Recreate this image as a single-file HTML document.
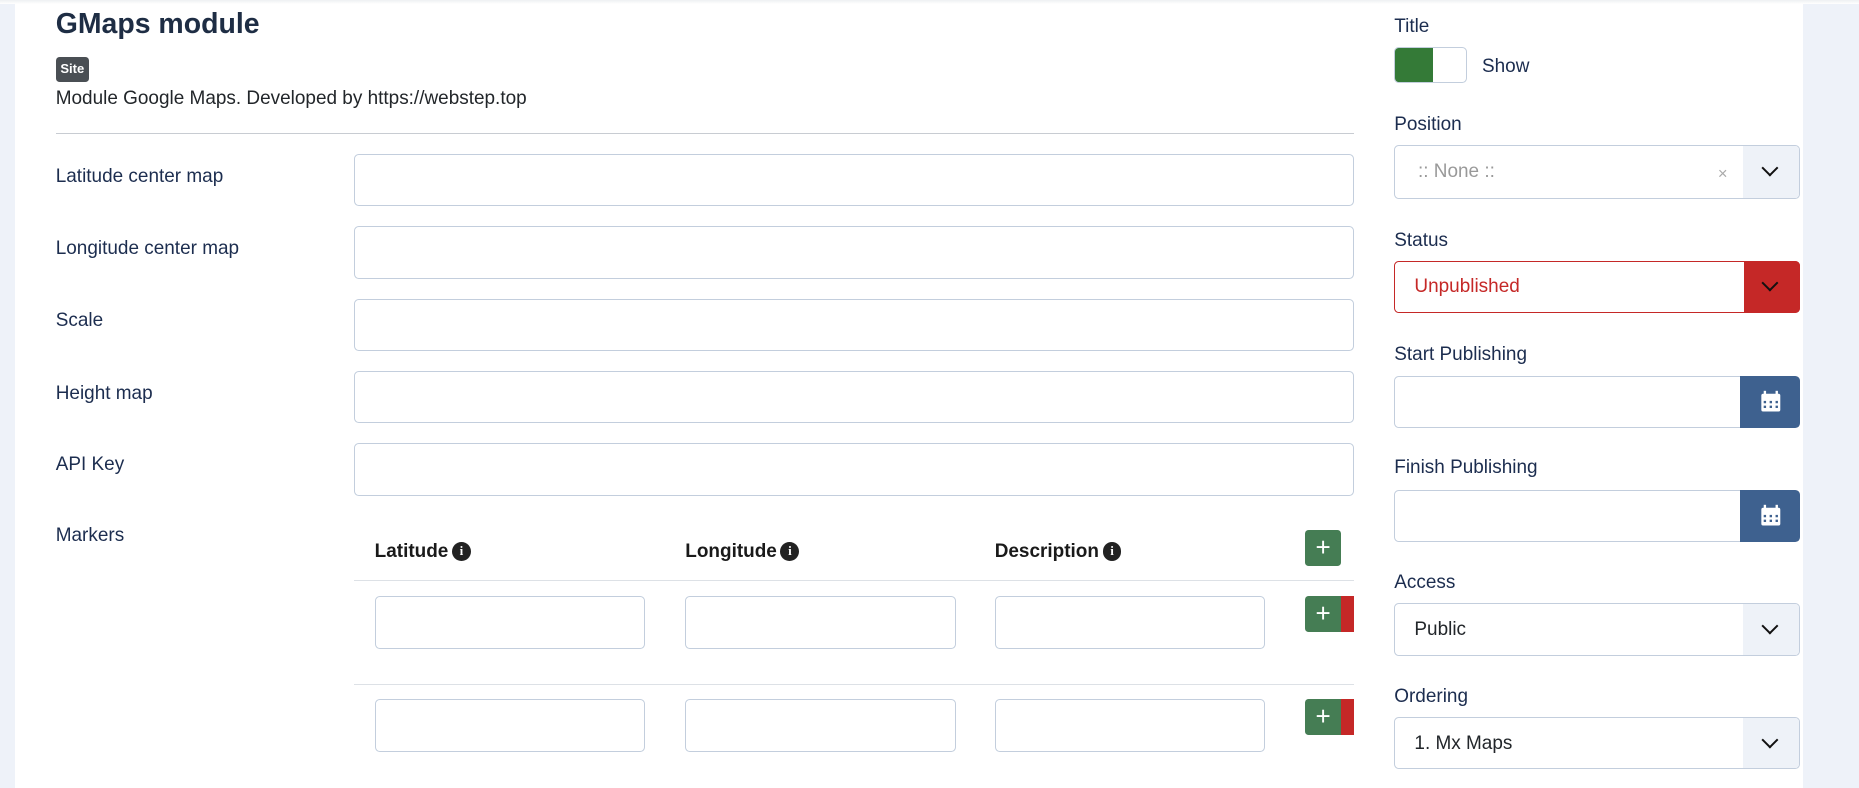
<!DOCTYPE html>
<html><head><meta charset="utf-8"><style>
html{zoom:1.18559}
*{box-sizing:border-box;margin:0;padding:0}
body{width:1568px;height:665px;overflow:hidden;background:#fff;font-family:"Liberation Sans",sans-serif;color:#1c2d4f;position:relative}
.a{position:absolute}
.lbl{position:absolute;font-size:16px;color:#1c2d4f;line-height:20px}
.in{position:absolute;border:1px solid #c3cedd;border-radius:4px;background:#fff;height:44px}
.chev{position:absolute;width:10px;height:10px;border-right:2px solid #111;border-bottom:2px solid #111;transform:rotate(45deg)}
.btn{position:absolute;width:30px;height:30px;background:#457d54;border-radius:3px;color:#fff;font-size:22px;line-height:29px;text-align:center}
.info{display:inline-block;width:16px;height:16px;border-radius:50%;background:#222;color:#fff;font-size:11px;line-height:16px;text-align:center;font-weight:bold;vertical-align:1px;margin-left:3px;font-family:"Liberation Serif",serif}
.th{position:absolute;top:456px;font-size:16px;font-weight:bold;color:#1a1a1a}
.cal{position:absolute;width:50px;height:44px;background:#3e618f;border-radius:0 4px 4px 0}
</style></head><body>
<div class="a" style="left:0;top:0;width:13px;height:665px;background:#eef2f9"></div>
<div class="a" style="left:1521px;top:0;width:47px;height:665px;background:#eef2f9"></div>
<div class="a" style="left:0;top:0;width:1568px;height:3px;background:linear-gradient(#eef0f3,#fff)"></div>

<div class="a" style="left:47px;top:7px;font-size:24px;font-weight:bold;color:#1e2d44">GMaps module</div>
<div class="a" style="left:47px;top:48px;width:28px;height:21px;background:#4a4f54;border-radius:3px;color:#fff;font-size:11px;font-weight:bold;line-height:21px;text-align:center">Site</div>
<div class="a" style="left:47px;top:74px;font-size:16px;color:#22262a">Module Google Maps. Developed by https://webstep.top</div>
<div class="a" style="left:47px;top:112px;width:1095px;height:1px;background:#c8ccd2"></div>

<div class="lbl" style="left:47px;top:139px">Latitude center map</div><div class="in" style="left:299px;top:130px;width:843px"></div>
<div class="lbl" style="left:47px;top:200px">Longitude center map</div><div class="in" style="left:299px;top:191px;width:843px"></div>
<div class="lbl" style="left:47px;top:261px">Scale</div><div class="in" style="left:299px;top:252px;width:843px"></div>
<div class="lbl" style="left:47px;top:322px">Height map</div><div class="in" style="left:299px;top:313px;width:843px"></div>
<div class="lbl" style="left:47px;top:382px">API Key</div><div class="in" style="left:299px;top:374px;width:843px"></div>
<div class="lbl" style="left:47px;top:442px">Markers</div>

<div class="th" style="left:316px">Latitude<span class="info">i</span></div>
<div class="th" style="left:578px">Longitude<span class="info">i</span></div>
<div class="th" style="left:839px">Description<span class="info">i</span></div>
<div class="btn" style="left:1101px;top:447px">+</div>
<div class="a" style="left:299px;top:489px;width:843px;height:1px;background:#dde1e6"></div>
<div class="in" style="left:316px;top:503px;width:228px"></div><div class="in" style="left:578px;top:503px;width:228px"></div><div class="in" style="left:839px;top:503px;width:228px"></div>
<div class="a" style="left:1130px;top:503px;width:12px;height:30px;background:#c52827"></div>
<div class="btn" style="left:1101px;top:503px;border-radius:3px 0 0 3px">+</div>
<div class="a" style="left:299px;top:577px;width:843px;height:1px;background:#dde1e6"></div>
<div class="in" style="left:316px;top:590px;width:228px"></div><div class="in" style="left:578px;top:590px;width:228px"></div><div class="in" style="left:839px;top:590px;width:228px"></div>
<div class="a" style="left:1130px;top:590px;width:12px;height:30px;background:#c52827"></div>
<div class="btn" style="left:1101px;top:590px;border-radius:3px 0 0 3px">+</div>

<div class="lbl" style="left:1176px;top:13px">Title</div>
<div class="a" style="left:1176px;top:40px;width:61px;height:30px;border:1px solid #c3cedd;border-radius:4px;overflow:hidden"><div style="width:32px;height:100%;background:#347a37"></div></div>
<div class="lbl" style="left:1250px;top:46px">Show</div>

<div class="lbl" style="left:1176px;top:95px">Position</div>
<div class="in" style="left:1176px;top:122px;width:342px;height:46px;overflow:hidden"><div class="a" style="right:0;top:0;width:47px;height:46px;background:#eef2f8"></div></div>
<div class="a" style="left:1196px;top:136px;font-size:16px;color:#999">:: None ::</div>
<div class="a" style="left:1449px;top:138px;font-size:14px;color:#aaa">×</div>
<div class="chev" style="left:1488px;top:137px"></div>

<div class="lbl" style="left:1176px;top:193px">Status</div>
<div class="in" style="left:1176px;top:220px;width:342px;border-color:#c52827"></div>
<div class="a" style="left:1471px;top:220px;width:47px;height:44px;background:#c52827;border-radius:0 4px 4px 0"></div>
<div class="a" style="left:1193px;top:233px;font-size:16px;color:#c52827">Unpublished</div>
<div class="chev" style="left:1488px;top:234px"></div>

<div class="lbl" style="left:1176px;top:289px">Start Publishing</div>
<div class="in" style="left:1176px;top:317px;width:300px"></div>
<div class="cal" style="left:1468px;top:317px"><svg width="50" height="44" viewBox="0 0 50 44"><rect x="18" y="15" width="16" height="15" rx="1.5" fill="#fff"/><rect x="20" y="12.5" width="2" height="4" fill="#fff"/><rect x="30" y="12.5" width="2" height="4" fill="#fff"/><g fill="#3e618f"><rect x="20" y="21" width="2" height="2"/><rect x="25" y="21" width="2" height="2"/><rect x="30" y="21" width="2" height="2"/><rect x="20" y="25" width="2" height="2"/><rect x="25" y="25" width="2" height="2"/><rect x="30" y="25" width="2" height="2"/></g></svg></div>

<div class="lbl" style="left:1176px;top:385px">Finish Publishing</div>
<div class="in" style="left:1176px;top:413px;width:300px"></div>
<div class="cal" style="left:1468px;top:413px"><svg width="50" height="44" viewBox="0 0 50 44"><rect x="18" y="15" width="16" height="15" rx="1.5" fill="#fff"/><rect x="20" y="12.5" width="2" height="4" fill="#fff"/><rect x="30" y="12.5" width="2" height="4" fill="#fff"/><g fill="#3e618f"><rect x="20" y="21" width="2" height="2"/><rect x="25" y="21" width="2" height="2"/><rect x="30" y="21" width="2" height="2"/><rect x="20" y="25" width="2" height="2"/><rect x="25" y="25" width="2" height="2"/><rect x="30" y="25" width="2" height="2"/></g></svg></div>

<div class="lbl" style="left:1176px;top:482px">Access</div>
<div class="in" style="left:1176px;top:509px;width:342px;overflow:hidden"><div class="a" style="right:0;top:0;width:47px;height:44px;background:#eef2f8"></div></div>
<div class="a" style="left:1193px;top:522px;font-size:16px;color:#22262a">Public</div>
<div class="chev" style="left:1488px;top:523px"></div>

<div class="lbl" style="left:1176px;top:578px">Ordering</div>
<div class="in" style="left:1176px;top:605px;width:342px;overflow:hidden"><div class="a" style="right:0;top:0;width:47px;height:44px;background:#eef2f8"></div></div>
<div class="a" style="left:1193px;top:618px;font-size:16px;color:#22262a">1. Mx Maps</div>
<div class="chev" style="left:1488px;top:619px"></div>
</body></html>
